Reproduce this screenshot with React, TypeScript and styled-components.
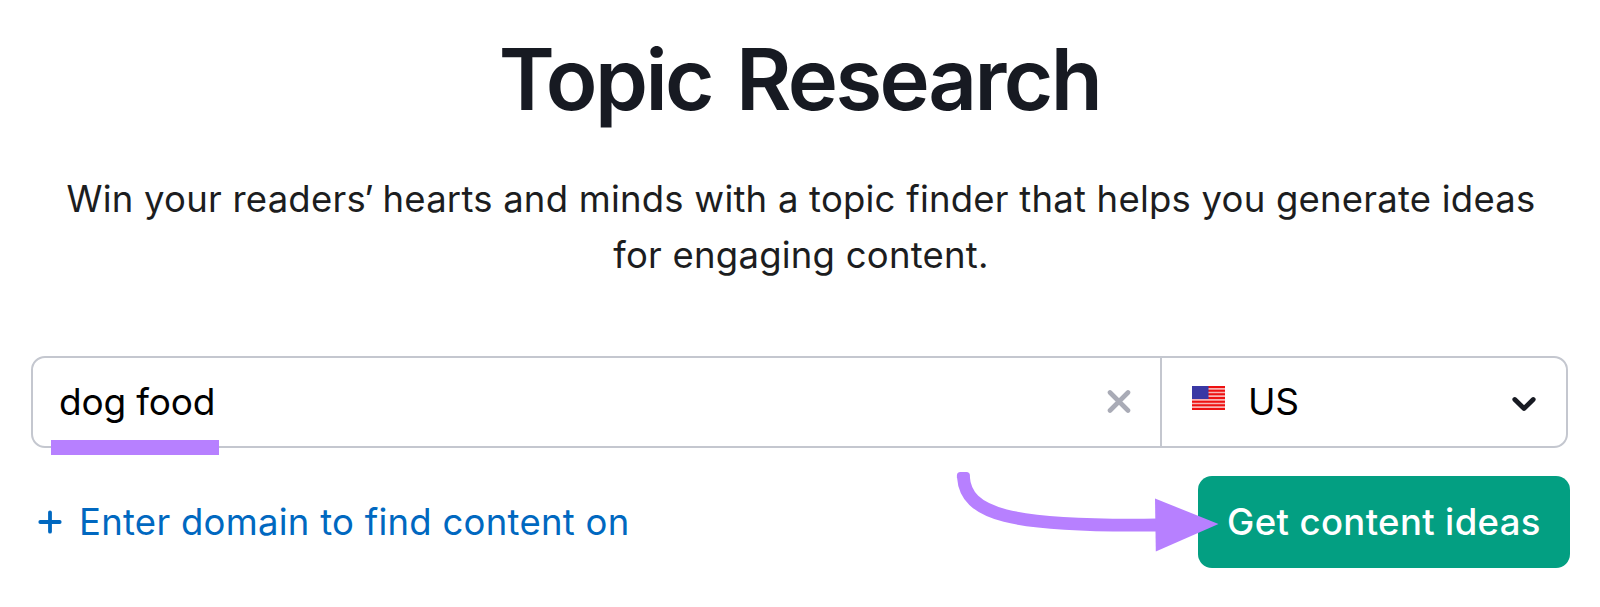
import React from 'react';
import styled, { createGlobalStyle } from 'styled-components';

const GlobalStyle = createGlobalStyle`
  *, *::before, *::after { box-sizing: border-box; }
  body {
    margin: 0;
    background: #fff;
    font-family: Inter, 'Liberation Sans', sans-serif;
  }
`;

const Page = styled.main`
  position: relative;
  width: 1600px;
  height: 607px;
  padding: 27px 29px 0 31px;
  overflow: hidden;
  background: #fff;
`;

const Title = styled.h1`
  margin: 0;
  padding-right: 3px;
  text-align: center;
  font-size: 85px;
  font-weight: 600;
  line-height: 106px;
  letter-spacing: -2.55px;
  word-spacing: 5px;
  color: #171a22;
`;

const Lead = styled.p`
  margin: 38px 0 0;
  text-align: center;
  font-size: 36.5px;
  line-height: 56px;
  letter-spacing: 0.22px;
  color: #1c1d20;
`;

const Tight = styled.span`
  letter-spacing: -1.6px;
`;

const SearchBar = styled.div`
  position: relative;
  display: flex;
  width: 1537px;
  height: 92px;
  margin-top: 73px;
  border: 2px solid #c4c7cf;
  border-radius: 14px;
`;

const Keyword = styled.div`
  flex: 1;
  display: flex;
  align-items: center;
  justify-content: space-between;
  padding: 0 29px 2px 26px;
  font-size: 37px;
  letter-spacing: -0.15px;
  color: #000;
`;

const Highlight = styled.span`
  position: absolute;
  left: 18px;
  top: 82px;
  width: 168px;
  height: 15px;
  background: #b780ff;
`;

const Country = styled.div`
  display: flex;
  align-items: center;
  width: 406px;
  padding: 0 30px 2px 30px;
  border-left: 2px solid #c4c7cf;
  font-size: 37px;
  letter-spacing: -0.3px;
  color: #000;
`;

const CountryName = styled.span`
  flex: 1;
  margin-left: 23px;
`;

const Flag = styled.svg`
  margin-bottom: 7px;
`;

const Chevron = styled.svg`
  margin-top: 5px;
`;

const Actions = styled.div`
  display: flex;
  align-items: center;
  justify-content: space-between;
  margin-top: 28px;
`;

const DomainLink = styled.a`
  display: flex;
  align-items: center;
  gap: 17px;
  padding-left: 7px;
  font-size: 36.5px;
  letter-spacing: 0.26px;
  color: #0068c0;
`;

const Submit = styled.button`
  width: 372px;
  height: 92px;
  margin-right: 1px;
  padding: 0;
  border: 0;
  border-radius: 14px;
  background: #039f82;
  color: #fff;
  font-family: inherit;
  font-size: 36.5px;
  font-weight: 500;
  letter-spacing: 0.37px;
`;

const Arrow = styled.svg`
  position: absolute;
  left: 950px;
  top: 465px;
`;

export default function App() {
  return (
    <>
      <GlobalStyle />
      <Page>
        <Title>Topic Research</Title>
        <Lead>
          Win your reader<Tight>s’</Tight> hearts and minds with a topic finder that helps you generate ideas
          <br />
          for engaging content.
        </Lead>
        <SearchBar>
          <Keyword>
            <span>dog food</span>
            <svg width="24" height="24" viewBox="0 0 24 24" fill="none" stroke="#a9abb6" strokeWidth="4.6" strokeLinecap="round">
              <path d="M3 3.5 21 21.5M21 3.5 3 21.5" />
            </svg>
          </Keyword>
          <Country>
            <Flag width="33" height="24" viewBox="0 0 33 24">
              <rect width="33" height="24" fill="#f7b5b5" />
              <path d="M0 1h33M0 4.7h33M0 8.3h33M0 12h33M0 15.7h33M0 19.3h33M0 23h33" stroke="#ee1111" strokeWidth="2" />
              <rect width="16.5" height="13" fill="#3a38a4" />
            </Flag>
            <CountryName>US</CountryName>
            <Chevron width="24" height="16" viewBox="0 0 24 16" fill="none" stroke="#171a22" strokeWidth="4.8" strokeLinecap="round" strokeLinejoin="round">
              <path d="M2.8 3.5 12 12.5 21.2 3.5" />
            </Chevron>
          </Country>
          <Highlight />
        </SearchBar>
        <Actions>
          <DomainLink>
            <svg width="24" height="24" viewBox="0 0 24 24" fill="none" stroke="#0068c0" strokeWidth="3.8" strokeLinecap="round">
              <path d="M12 2.3V21.7M2.3 12H21.7" />
            </svg>
            <span>Enter domain to find content on</span>
          </DomainLink>
          <Submit>Get content ideas</Submit>
        </Actions>
        <Arrow width="270" height="90" viewBox="950 465 270 90">
          <path d="M963.4 477C966 514 1008 527 1157 525" fill="none" stroke="#b780ff" strokeWidth="12.8" />
          <path d="M956.9 478v-2.5q0-3.5 3.5-3.5h6q3.5 0 3.5 3.5v2.5z" fill="#b780ff" />
          <path d="M1155 498.5 1218.5 524 1155.8 551.5z" fill="#b780ff" />
        </Arrow>
      </Page>
    </>
  );
}
